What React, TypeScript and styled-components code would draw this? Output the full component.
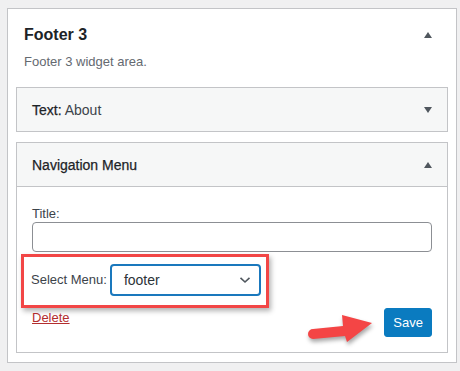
import React from "react";
import styled, { createGlobalStyle } from "styled-components";

const Global = createGlobalStyle`
  html, body { margin: 0; padding: 0; background: #f0f0f1; }
  body { font-family: "Liberation Sans", Arial, sans-serif; color: #2c3338; }
  * { box-sizing: border-box; }
`;

const Page = styled.div`
  padding: 8px 4px 8px 7px;
`;

const Card = styled.div`
  width: 450px;
  background: #fff;
  border: 1px solid #c3c4c7;
  padding: 0 8px 9px;
`;

const CardHeader = styled.div`
  display: flex;
  align-items: center;
  justify-content: space-between;
  padding: 16px 16px 0 8px;
`;

const CardTitle = styled.h2`
  margin: 0;
  font-size: 16px;
  line-height: 20px;
  font-weight: 700;
  color: #1d2327;
`;

const Description = styled.p`
  margin: 8px 0 0;
  padding-left: 8px;
  font-size: 13px;
  line-height: 18px;
  color: #646970;
`;

const Triangle = styled.span<{ $down?: boolean }>`
  width: 0;
  height: 0;
  border-left: 4.5px solid transparent;
  border-right: 4.5px solid transparent;
  ${(p) =>
    p.$down
      ? "border-top: 6px solid #50575e;"
      : "border-bottom: 6px solid #50575e;"}
  flex: none;
`;

const Widget = styled.div<{ $gap: number }>`
  margin-top: ${(p) => p.$gap}px;
  border: 1px solid #c3c4c7;
  background: #fff;
`;

const WidgetTop = styled.div<{ $open?: boolean }>`
  height: ${(p) => (p.$open ? 44 : 43)}px;
  display: flex;
  align-items: center;
  justify-content: space-between;
  padding: 0 15px;
  background: #f6f7f7;
  ${(p) => (p.$open ? "border-bottom: 1px solid #c3c4c7;" : "")}
`;

const WidgetTitle = styled.h3`
  margin: 0;
  font-size: 14px;
  line-height: 18px;
  font-weight: 400;
  color: #1d2327;
  -webkit-text-stroke: 0.25px #1d2327;
`;

const InTitle = styled.span`
  color: #3c434a;
  -webkit-text-stroke: 0;
`;

const WidgetBody = styled.div`
  padding: 19px 15px 15px;
`;

const Label = styled.label`
  display: block;
  font-size: 13px;
  line-height: 16px;
  color: #3c434a;
`;

const TextInput = styled.input`
  display: block;
  width: 100%;
  height: 30px;
  border: 1px solid #8c8f94;
  border-radius: 4px;
  background: #fff;
  margin: 0;
`;

const Highlight = styled.div`
  margin: 2px 0 0 -11px;
  width: 248px;
  display: flex;
  align-items: center;
  gap: 3px;
  border: 3px solid #f24646;
  padding: 7px 4px 9px 7px;
  box-shadow: 2px 3px 5px rgba(0, 0, 0, 0.3);
`;

const InlineLabel = styled.span`
  font-size: 13px;
  line-height: 16px;
  color: #3c434a;
  white-space: nowrap;
`;

const SelectBox = styled.div`
  width: 151px;
  height: 32px;
  flex: none;
  border: 2px solid #1a78bd;
  border-radius: 4px;
  display: flex;
  align-items: center;
  justify-content: space-between;
  padding: 0 8px 0 12px;
  font-size: 14px;
  color: #2c3338;
`;

const Actions = styled.div`
  position: relative;
  display: flex;
  align-items: flex-start;
  justify-content: space-between;
`;

const DeleteLink = styled.a`
  margin-top: 2px;
  font-size: 13px;
  line-height: 16px;
  color: #b32d2e;
  text-decoration: underline;
`;

const SaveButton = styled.button`
  height: 29px;
  padding: 0 8px;
  border: 1px solid #0a7bc0;
  border-radius: 3px;
  background: #0a7bc0;
  color: #fff;
  font-family: "Liberation Sans", Arial, sans-serif;
  font-size: 13px;
  line-height: 27px;
`;

const ArrowSvg = styled.svg`
  position: absolute;
  left: 268px;
  top: 0;
  overflow: visible;
  filter: drop-shadow(1px 3px 2px rgba(0, 0, 0, 0.35));
`;

export default function App() {
  return (
    <>
      <Global />
      <Page>
        <Card>
          <CardHeader>
            <CardTitle>Footer 3</CardTitle>
            <Triangle />
          </CardHeader>
          <Description>Footer 3 widget area.</Description>

          <Widget $gap={16}>
            <WidgetTop>
              <WidgetTitle>
                Text: <InTitle>About</InTitle>
              </WidgetTitle>
              <Triangle $down />
            </WidgetTop>
          </Widget>

          <Widget $gap={10}>
            <WidgetTop $open>
              <WidgetTitle>Navigation Menu</WidgetTitle>
              <Triangle />
            </WidgetTop>
            <WidgetBody>
              <Label>Title:</Label>
              <TextInput type="text" />
              <Highlight>
                <InlineLabel>Select Menu:</InlineLabel>
                <SelectBox>
                  <span>footer</span>
                  <svg width="12" height="8" viewBox="0 0 12 8">
                    <path
                      d="M1.5 1.8 L6 6 L10.5 1.8"
                      fill="none"
                      stroke="#50575e"
                      strokeWidth="1.6"
                    />
                  </svg>
                </SelectBox>
              </Highlight>
              <Actions>
                <DeleteLink href="#">Delete</DeleteLink>
                <SaveButton>Save</SaveButton>
                <ArrowSvg width="80" height="44" viewBox="0 0 80 44">
                  <path
                    d="M13 21 L43 18 L42 7 L72 15 L47 34 L45 28 L13 31 A5 5 0 0 1 13 21 Z"
                    fill="#f44545"
                  />
                </ArrowSvg>
              </Actions>
            </WidgetBody>
          </Widget>
        </Card>
      </Page>
    </>
  );
}
